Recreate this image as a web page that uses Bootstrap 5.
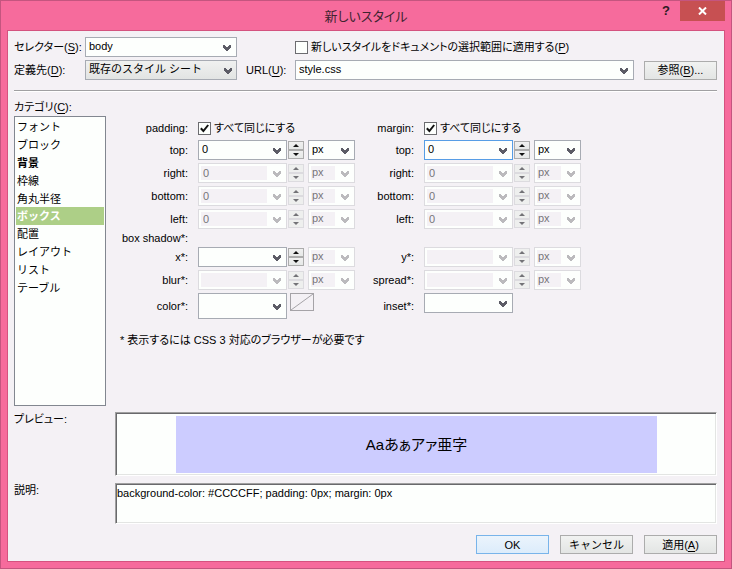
<!DOCTYPE html>
<html lang="ja">
<head>
<meta charset="utf-8">
<meta name="viewport" content="width=device-width, initial-scale=1">
<title>新しいスタイル</title>
<link href="https://cdn.jsdelivr.net/npm/bootstrap@5.3.0/dist/css/bootstrap.min.css" rel="stylesheet">
<style>
:root{
  --panel:#f4f1f5; --field:#fdfffd; --line:#a7abb3; --line-off:#dcdbdf;
  --chev:url("data:image/svg+xml,%3Csvg xmlns='http://www.w3.org/2000/svg' viewBox='0 0 8 6'%3E%3Cpath d='M0 0h2v1h1v1h2V1h1V0h2v3H7v1H6v1H5v1H3V5H2V4H1V3H0z' fill='%235c5c66'/%3E%3C/svg%3E");
  --chev-off:url("data:image/svg+xml,%3Csvg xmlns='http://www.w3.org/2000/svg' viewBox='0 0 8 6'%3E%3Cpath d='M0 0h2v1h1v1h2V1h1V0h2v3H7v1H6v1H5v1H3V5H2V4H1V3H0z' fill='%23bbbabd'/%3E%3C/svg%3E");
}
body{font-family:"Liberation Sans","Noto Sans CJK JP",sans-serif;font-size:11px;line-height:14px;color:#000;font-feature-settings:"palt";background:#f66b9c}
.window{min-height:100vh;border:1px solid #c4557f;background:#f66b9c;padding:0 6px 6px}
.titlebar{height:29px;flex:none}
.titlebar h1{font-size:13px;line-height:20px;color:#3f2430;padding-top:6px}
.side{flex:1 1 0}
.help{width:18px;height:20px;background:none;border:0;color:#2c1a22;font-weight:700;font-size:13px;line-height:20px;margin-right:5px}
.close-win{width:45px;height:20px;background:#c75052;border:0}
.panel{background:var(--panel);border:1px solid #d4537f;padding:6px 7px 7px 6px}
.u{text-decoration:underline;text-underline-offset:2px}
.head{display:grid;grid-template-columns:71px 152px 58px 1fr 73px;row-gap:3px;align-items:center;white-space:nowrap}
.head .push{margin-left:9px}
.combo{display:flex;height:20px;border:1px solid var(--line);background:var(--field)}
.head .url-box{margin-right:10px}
.combo input{flex:1 1 0;min-width:0;border:0;background:none;padding:0 0 2px 3px;font-size:11px;line-height:14px;color:#000;outline:0}
.combo button{width:16px;border:0;padding:0;background:var(--chev) 3px 7px/8px 6px no-repeat}
.combo:has(input:disabled){border-color:var(--line-off)}
.combo input:disabled{background:var(--panel);margin:2px 3px 2px 2px;padding:0 0 1px 2px;color:#77757a}
.combo button:disabled{background-image:var(--chev-off)}
.combo.active{border-color:#569de5}
.combo.tall{height:26px}
.combo.tall button{background-position:3px 10px}
.pick.form-select{height:20px;border:1px solid var(--line);border-radius:0;padding:0 16px 2px 3px;font-size:11px;line-height:16px;color:#000;background:var(--chev) right 5px top 7px/8px 6px no-repeat var(--field)}
.pick.wide.form-select{background:var(--chev) right 4px top 7px/8px 6px no-repeat,linear-gradient(#f0f1f0,#e2e4e3)}
.pick.form-select:disabled{border-color:var(--line-off);color:#77757a;background:var(--chev-off) right 5px top 7px/8px 6px no-repeat,linear-gradient(var(--panel),var(--panel)) 2px 2px/24px 14px no-repeat var(--field)}
.push-btn{height:19px;border:1px solid #acacac;border-radius:0;background:linear-gradient(#f1f2f1,#e3e5e4);padding:0;font-size:11px;line-height:16px;color:#000;width:73px}
.push-btn.main{border-color:#78b4ea;background:linear-gradient(#ebf4fc,#dcecfb)}
.tick.form-check-input{width:13px;height:13px;margin:0;border:1px solid #6c6c70;border-radius:0;background-color:var(--field);flex:none}
.tick.form-check-input:checked{background:url("data:image/svg+xml,%3Csvg xmlns='http://www.w3.org/2000/svg' viewBox='0 0 11 11'%3E%3Cpath d='M1.8 5.2 4.4 8 9.2 2' fill='none' stroke='%23111' stroke-width='2'/%3E%3C/svg%3E") 0 0/11px 11px no-repeat var(--field)}
.tick+label{margin-left:3px}
.rule{height:2px;margin:10px 0 7px;background:linear-gradient(#a0a0a2 50%,#fff 50%)}
.cats{width:92px;flex:none}
.cats .cats-title{line-height:17px}
.catlist{border:1px solid #828790;border-radius:0;background:var(--field);padding:1px}
.catlist .list-group-item{border:0;border-radius:0;padding:0 1px;height:18px;line-height:18px;background:none;color:#000;font-size:11px;text-align:left}
.catlist .list-group-item.active{background:#adcf87;color:#fff;font-weight:700}
.form-area{padding:20px 0 0 6px}
.fields{display:grid;row-gap:3px;column-gap:10px;align-items:center;text-align:right;grid-template-rows:18px repeat(4,20px) 12px 20px 20px 26px}
.fields.first{grid-template-columns:76px 157px}
.fields.second{grid-template-columns:59px 157px}
.ctl{display:flex;height:20px;text-align:left}
.ctl .combo{width:89px}
.ctl .pick{width:47px;margin-left:4px}
.ctl.top-row{height:26px}
.spin{width:16px;height:18px;margin:1px 0 0 1px;display:flex;flex-direction:column}
.spin button{flex:1 1 0;border:1px solid #acacac;padding:0;background:linear-gradient(#f0f0f0,#e6e8e7);display:flex;align-items:center;justify-content:center}
.spin button:disabled{border-color:var(--line-off);background:#eeefee}
.spin button::before{content:"";border:3px solid transparent;border-top-width:0;border-bottom-color:#111}
.spin button+button::before{border-width:3px 3px 0;border-top-color:#111}
.spin button:disabled::before{border-bottom-color:#737377}
.spin button+button:disabled::before{border-top-color:#737377}
.swatch{width:24px;height:18px;margin-left:3px;padding:0;border:1px solid #a5a3a7;background:none;display:flex}
.note{margin:14px 0 0 8px}
.lower{display:grid;grid-template-columns:101px 1fr;row-gap:7px;margin-top:6px}
.sunk{border:1px solid;border-color:#a0a0a0 #fff #fff #a0a0a0;background:var(--field);box-shadow:inset 1px 1px #69696c,inset -1px -1px #e3e5e3}
.preview{height:64px;padding:3px 59px 2px 60px}
.sample{background:#ccccff;font-size:15px;line-height:24px}
textarea.sunk{height:41px;padding:2px 1px;resize:none;font-size:11px;line-height:14px;color:#000;width:100%;display:block;outline:0}
.actions{gap:11px;margin-top:11px}
</style>
</head>
<body>
<div class="window d-flex flex-column">
  <header class="titlebar d-flex align-items-start">
    <div class="side"></div>
    <h1 class="m-0 fw-normal">新しいスタイル</h1>
    <div class="side d-flex justify-content-end">
      <button class="help p-0" type="button" aria-label="ヘルプ">?</button>
      <button class="close-win p-0 d-flex align-items-center justify-content-center" type="button" aria-label="閉じる"><svg width="9" height="8" viewBox="0 0 9 8"><path d="M1 .5 8 7.500M8 .5 1 7.500" stroke="#fff" stroke-width="2"/></svg></button>
    </div>
  </header>

  <main class="panel flex-grow-1 d-flex flex-column">
    <div class="head">
      <label for="selector">セレクター(<span class="u">S</span>):</label>
      <div class="combo"><input id="selector" type="text" value="body"><button type="button" aria-label="セレクターの一覧"></button></div>
      <span></span>
      <div class="d-flex align-items-center"><input class="form-check-input tick" type="checkbox" id="apply"><label for="apply">新しいスタイルをドキュメントの選択範囲に適用する(<span class="u">P</span>)</label></div>
      <span></span>
      <label for="define">定義先(<span class="u">D</span>):</label>
      <select class="form-select pick wide" id="define"><option>既存のスタイル シート</option></select>
      <label class="push" for="url">URL(<span class="u">U</span>):</label>
      <div class="combo url-box"><input id="url" type="text" value="style.css"><button type="button" aria-label="URL の一覧"></button></div>
      <button class="btn push-btn" type="button">参照(<span class="u">B</span>)...</button>
    </div>
    <div class="rule"></div>

    <div class="d-flex flex-grow-1">
      <div class="cats d-flex flex-column">
        <div class="cats-title" id="catlabel">カテゴリ(<span class="u">C</span>):</div>
        <div class="list-group catlist flex-grow-1" role="group" aria-labelledby="catlabel">
          <button type="button" class="list-group-item">フォント</button>
          <button type="button" class="list-group-item">ブロック</button>
          <button type="button" class="list-group-item fw-bold">背景</button>
          <button type="button" class="list-group-item">枠線</button>
          <button type="button" class="list-group-item">角丸半径</button>
          <button type="button" class="list-group-item active">ボックス</button>
          <button type="button" class="list-group-item">配置</button>
          <button type="button" class="list-group-item">レイアウト</button>
          <button type="button" class="list-group-item">リスト</button>
          <button type="button" class="list-group-item">テーブル</button>
        </div>
      </div>

      <div class="form-area">
        <div class="d-flex">
          <div class="fields first">
            <span>padding:</span>
            <div class="ctl align-items-center"><input class="form-check-input tick" type="checkbox" id="padall" checked><label for="padall">すべて同じにする</label></div>
            <label for="pt">top:</label>
            <div class="ctl"><div class="combo"><input id="pt" type="text" value="0"><button type="button" aria-label="一覧"></button></div><div class="spin"><button type="button" aria-label="増やす"></button><button type="button" aria-label="減らす"></button></div><select class="form-select pick" aria-label="単位"><option>px</option></select></div>
            <label for="pr">right:</label>
            <div class="ctl"><div class="combo"><input id="pr" type="text" value="0" disabled><button type="button" aria-label="一覧" disabled></button></div><div class="spin"><button type="button" aria-label="増やす" disabled></button><button type="button" aria-label="減らす" disabled></button></div><select class="form-select pick" aria-label="単位" disabled><option>px</option></select></div>
            <label for="pb">bottom:</label>
            <div class="ctl"><div class="combo"><input id="pb" type="text" value="0" disabled><button type="button" aria-label="一覧" disabled></button></div><div class="spin"><button type="button" aria-label="増やす" disabled></button><button type="button" aria-label="減らす" disabled></button></div><select class="form-select pick" aria-label="単位" disabled><option>px</option></select></div>
            <label for="pl">left:</label>
            <div class="ctl"><div class="combo"><input id="pl" type="text" value="0" disabled><button type="button" aria-label="一覧" disabled></button></div><div class="spin"><button type="button" aria-label="増やす" disabled></button><button type="button" aria-label="減らす" disabled></button></div><select class="form-select pick" aria-label="単位" disabled><option>px</option></select></div>
            <span class="text-nowrap">box shadow*:</span>
            <span></span>
            <label for="sx">x*:</label>
            <div class="ctl"><div class="combo"><input id="sx" type="text"><button type="button" aria-label="一覧"></button></div><div class="spin"><button type="button" aria-label="増やす"></button><button type="button" aria-label="減らす"></button></div><select class="form-select pick" aria-label="単位" disabled><option>px</option></select></div>
            <label for="sblur">blur*:</label>
            <div class="ctl"><div class="combo"><input id="sblur" type="text" disabled><button type="button" aria-label="一覧" disabled></button></div><div class="spin"><button type="button" aria-label="増やす" disabled></button><button type="button" aria-label="減らす" disabled></button></div><select class="form-select pick" aria-label="単位" disabled><option>px</option></select></div>
            <label for="scolor">color*:</label>
            <div class="ctl top-row"><div class="combo tall"><input id="scolor" type="text"><button type="button" aria-label="一覧"></button></div><button class="swatch" type="button" aria-label="色の選択"><svg width="22" height="16" viewBox="0 0 22 16"><path d="M0 16 22 0" stroke="#a5a3a7"/></svg></button></div>
          </div>

          <div class="fields second">
            <span>margin:</span>
            <div class="ctl align-items-center"><input class="form-check-input tick" type="checkbox" id="marall" checked><label for="marall">すべて同じにする</label></div>
            <label for="mt">top:</label>
            <div class="ctl"><div class="combo active"><input id="mt" type="text" value="0"><button type="button" aria-label="一覧"></button></div><div class="spin"><button type="button" aria-label="増やす"></button><button type="button" aria-label="減らす"></button></div><select class="form-select pick" aria-label="単位"><option>px</option></select></div>
            <label for="mr">right:</label>
            <div class="ctl"><div class="combo"><input id="mr" type="text" value="0" disabled><button type="button" aria-label="一覧" disabled></button></div><div class="spin"><button type="button" aria-label="増やす" disabled></button><button type="button" aria-label="減らす" disabled></button></div><select class="form-select pick" aria-label="単位" disabled><option>px</option></select></div>
            <label for="mb">bottom:</label>
            <div class="ctl"><div class="combo"><input id="mb" type="text" value="0" disabled><button type="button" aria-label="一覧" disabled></button></div><div class="spin"><button type="button" aria-label="増やす" disabled></button><button type="button" aria-label="減らす" disabled></button></div><select class="form-select pick" aria-label="単位" disabled><option>px</option></select></div>
            <label for="ml">left:</label>
            <div class="ctl"><div class="combo"><input id="ml" type="text" value="0" disabled><button type="button" aria-label="一覧" disabled></button></div><div class="spin"><button type="button" aria-label="増やす" disabled></button><button type="button" aria-label="減らす" disabled></button></div><select class="form-select pick" aria-label="単位" disabled><option>px</option></select></div>
            <span></span>
            <span></span>
            <label for="sy">y*:</label>
            <div class="ctl"><div class="combo"><input id="sy" type="text" disabled><button type="button" aria-label="一覧" disabled></button></div><div class="spin"><button type="button" aria-label="増やす" disabled></button><button type="button" aria-label="減らす" disabled></button></div><select class="form-select pick" aria-label="単位" disabled><option>px</option></select></div>
            <label for="sspread">spread*:</label>
            <div class="ctl"><div class="combo"><input id="sspread" type="text" disabled><button type="button" aria-label="一覧" disabled></button></div><div class="spin"><button type="button" aria-label="増やす" disabled></button><button type="button" aria-label="減らす" disabled></button></div><select class="form-select pick" aria-label="単位" disabled><option>px</option></select></div>
            <label for="sinset">inset*:</label>
            <div class="ctl top-row"><div class="combo"><input id="sinset" type="text"><button type="button" aria-label="一覧"></button></div></div>
          </div>
        </div>
        <p class="note">* 表示するには CSS 3 対応のブラウザーが必要です</p>
      </div>
    </div>

    <div class="lower">
      <span>プレビュー:</span>
      <div class="sunk preview d-flex"><div class="sample flex-grow-1 d-flex align-items-center justify-content-center">Aaあぁアァ亜字</div></div>
      <label for="desc">説明:</label>
      <textarea class="sunk" id="desc" readonly>background-color: #CCCCFF; padding: 0px; margin: 0px</textarea>
    </div>
    <div class="actions d-flex justify-content-end">
      <button class="btn push-btn main" type="button">OK</button>
      <button class="btn push-btn" type="button">キャンセル</button>
      <button class="btn push-btn" type="button">適用(<span class="u">A</span>)</button>
    </div>
  </main>
</div>
<script src="https://cdn.jsdelivr.net/npm/bootstrap@5.3.0/dist/js/bootstrap.bundle.min.js"></script>
</body>
</html>
